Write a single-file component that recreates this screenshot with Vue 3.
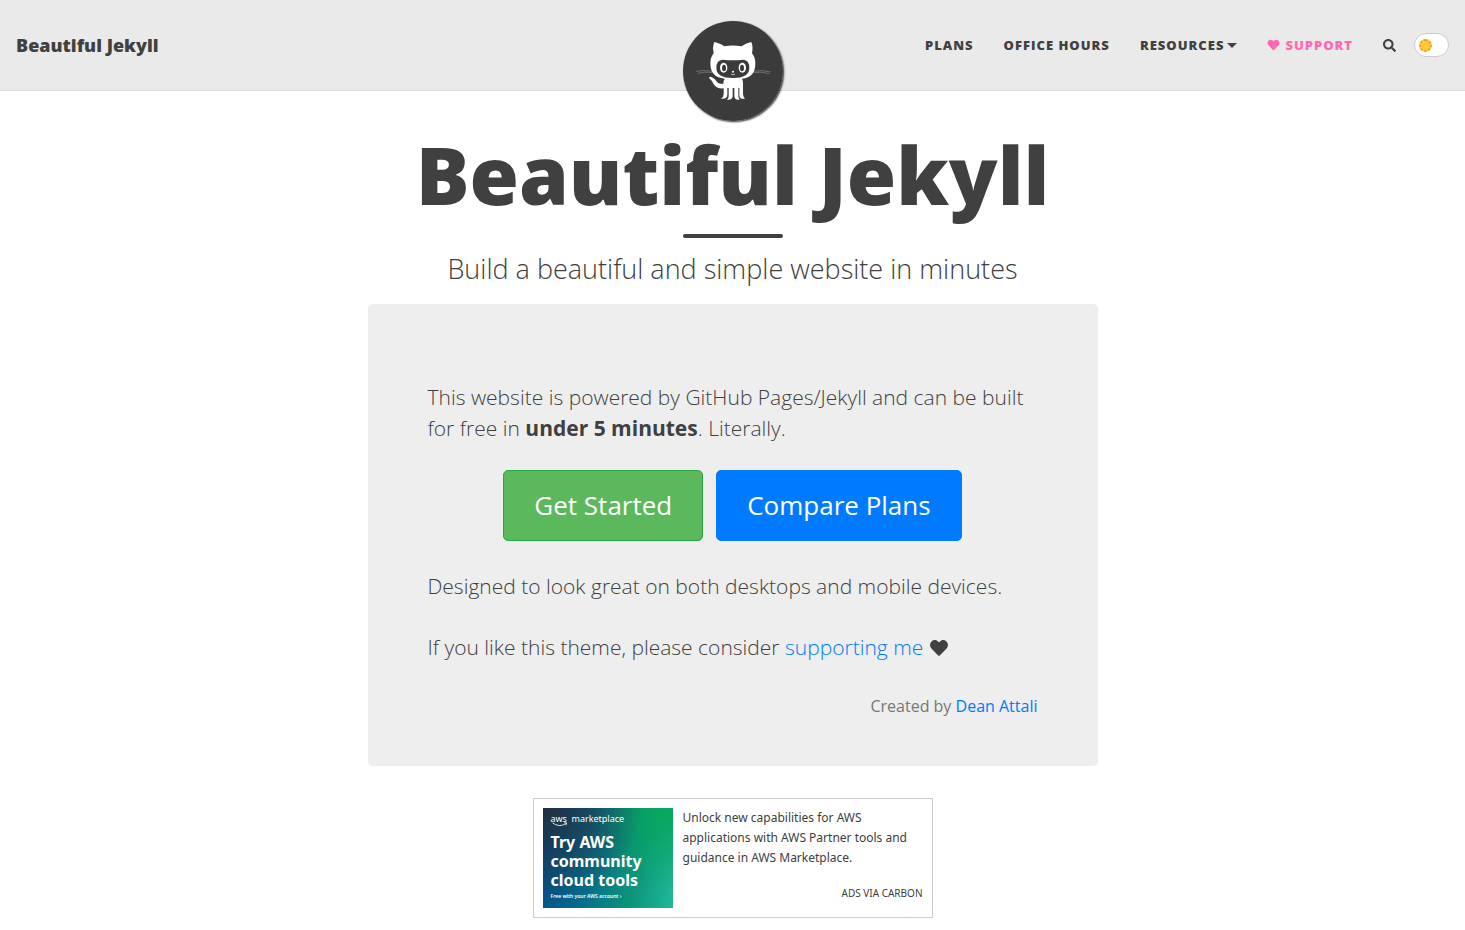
<script setup>
import { ref } from "vue"

const dark = ref(false)

const heart =
    "M462.3 62.6C407.5 15.9 326 24.3 275.7 76.200l-19.700 20.300-19.700-20.300C186.100 24.300 104.500 15.900 49.700 62.600c-62.800 53.600-66.100 149.800-9.900 207.900l193.500 199.800c12.500 12.900 32.800 12.900 45.300 0l193.500-199.800c56.300-58.100 53-154.300-9.800-207.900z"
</script>

<template>
  <div class="page">
    <header class="navbar">
      <a class="brand" href="#">Beautiful Jekyll</a>

      <a class="avatar" href="#" aria-label="Home">
        <svg viewBox="39 33 300 300">
          <circle cx="189" cy="183" r="150" fill="#3b3b3b" />
          <g fill="none" stroke="#888" stroke-width="2">
            <path d="M78 184 Q100 179 128 184" />
            <path d="M83 190 Q106 184 130 188" />
            <path d="M250 184 Q278 179 302 186" />
            <path d="M250 188 Q276 184 298 191" />
          </g>
          <path
              fill="#fff"
              d="M132 97 Q146 98 163 109 Q188 104 214 109 Q230 98 244 96 Q250 111 246 130 Q256 142 256 160 Q256 204 216 206 Q219 211 219 221 L219 252 Q220 262 225 266 Q210 269 208 257 L208 234 L205 234 L205 258 Q205 266 209 269 Q195 272 193 259 L193 234 L188 234 L188 259 Q187 271 171 269 Q176 266 176 258 L176 234 L172 234 L172 255 Q171 268 153 266 Q161 262 161 252 L161 235 Q139 237 130 221 Q127 212 117 204 Q119 197 128 203 Q138 208 139 214 Q144 222 153 221 L160 221 Q160 211 164 206 Q121 203 121 160 Q121 142 131 130 Q127 112 132 97 Z"
          />
          <path
              fill="#3b3b3b"
              d="M158 149 Q188 153 220 149 Q238 150 238 174 Q238 204 189 204 Q139 204 139 174 Q139 150 158 149 Z"
          />
          <ellipse cx="161" cy="173" rx="11" ry="15" fill="#fff" />
          <ellipse cx="217" cy="173" rx="11" ry="15" fill="#fff" />
          <ellipse cx="162" cy="174" rx="6" ry="10" fill="#3b3b3b" />
          <ellipse cx="216" cy="174" rx="6" ry="10" fill="#3b3b3b" />
          <circle cx="189" cy="185" r="3" fill="#fff" />
          <path
              d="M183 192 Q189 197 195 192"
              fill="none"
              stroke="#fff"
              stroke-width="2"
          />
        </svg>
      </a>

      <nav class="links">
        <a href="#">Plans</a>
        <a href="#">Office Hours</a>
        <a class="dropdown" href="#">Resources</a>
        <a class="support" href="#">
          <svg class="heart" viewBox="0 0 512 512">
            <path :d="heart" fill="currentColor" />
          </svg>
          Support
        </a>
        <button class="search" type="button" aria-label="Search">
          <svg viewBox="0 0 512 512">
            <path
                fill="currentColor"
                d="M505 442.700L405.300 343c-4.500-4.500-10.600-7-17-7H372c27.600-35.300 44-79.700 44-128C416 93.100 322.900 0 208 0S0 93.100 0 208s93.100 208 208 208c48.300 0 92.700-16.400 128-44v16.300c0 6.400 2.500 12.500 7 17l99.700 99.700c9.400 9.400 24.600 9.400 33.900 0l28.300-28.300c9.400-9.400 9.400-24.600.1-34zM208 336c-70.700 0-128-57.200-128-128 0-70.700 57.200-128 128-128 70.700 0 128 57.200 128 128 0 70.700-57.200 128-128 128z"
            />
          </svg>
        </button>
        <label class="theme">
          <input v-model="dark" type="checkbox" aria-label="Dark mode" />
          <span class="sun"></span>
        </label>
      </nav>
    </header>

    <main>
      <div class="heading">
        <h1>Beautiful Jekyll</h1>
        <hr />
        <p class="subheading">Build a beautiful and simple website in minutes</p>
      </div>

      <section class="intro">
        <p>
          This website is powered by GitHub Pages/Jekyll and can be built for
          free in <strong>under 5 minutes</strong>. Literally.
        </p>

        <div class="actions">
          <a class="btn started" href="#">Get Started</a>
          <a class="btn plans" href="#">Compare Plans</a>
        </div>

        <p>Designed to look great on both desktops and mobile devices.</p>

        <p>
          If you like this theme, please consider
          <a href="#">supporting me</a>
          <svg class="heart" viewBox="0 0 512 512">
            <path :d="heart" fill="currentColor" />
          </svg>
        </p>

        <p class="author">Created by <a href="#">Dean Attali</a></p>
      </section>

      <aside class="ad">
        <a class="ad-image" href="#">
          <span class="ad-logo">
            <span class="aws">
              aws
              <svg viewBox="0 0 20 6">
                <path
                    d="M1 1 Q9 7 17 2 M15 1 L18 1 L17 4"
                    fill="none"
                    stroke="#fff"
                />
              </svg>
            </span>
            marketplace
          </span>
          <strong>Try AWS community cloud tools</strong>
          <small>Free with your AWS account ›</small>
        </a>

        <div class="ad-copy">
          <a class="ad-text" href="#">
            Unlock new capabilities for AWS applications with AWS Partner tools
            and guidance in AWS Marketplace.
          </a>
          <a class="ad-via" href="#">ads via Carbon</a>
        </div>
      </aside>
    </main>
  </div>
</template>

<style>
body {
  margin: 0;
  background: #fff;
}
</style>

<style scoped>
.page {
  color: #404040;
  font-family: "Open Sans", "Noto Sans", sans-serif;
}

a {
  color: #007bff;
  text-decoration: none;
}

.navbar {
  position: relative;
  display: flex;
  align-items: center;
  justify-content: space-between;
  height: 90px;
  padding: 0 16px;
  background: #eaeaea;
  border-bottom: 1px solid #ddd;
}

.brand {
  color: #404040;
  font-size: 18px;
  font-weight: 800;
}

.avatar {
  position: absolute;
  top: 21px;
  left: 50%;
  width: 100px;
  height: 100px;
  margin-left: -50px;
  border-radius: 50%;
  box-shadow: 1px 1px 2px rgba(0, 0, 0, 0.8);
}

.avatar svg {
  display: block;
  width: 100%;
}

.links {
  display: flex;
  align-items: center;
  gap: 30px;
}

.links a {
  color: #404040;
  font-size: 13px;
  font-weight: 800;
  letter-spacing: 1px;
  text-transform: uppercase;
}

.links .dropdown {
  display: flex;
  align-items: center;
  gap: 3px;
}

.dropdown::after {
  content: "";
  border: 5px solid transparent;
  border-top-color: #404040;
  border-bottom: 0;
}

.links .support {
  display: flex;
  align-items: center;
  gap: 5px;
  color: #ff69b4;
}

.support .heart {
  width: 13px;
  height: 12px;
}

.search {
  padding: 0;
  border: 0;
  background: none;
  color: #404040;
}

.search svg {
  display: block;
  width: 13px;
  height: 13px;
}

.theme {
  display: flex;
  align-items: center;
  box-sizing: border-box;
  width: 35px;
  height: 24px;
  margin-left: -12px;
  padding: 0 4px;
  border: 1px solid #ccc;
  border-radius: 12px;
  background: #fff;
}

.theme input {
  position: absolute;
  opacity: 0;
}

.sun {
  box-sizing: border-box;
  width: 13px;
  height: 13px;
  border: 2px dotted #f39a1e;
  border-radius: 50%;
  background: #ffc83d;
}

.theme input:checked + .sun {
  margin-left: auto;
}

main {
  padding: 0 16px;
}

.heading {
  padding-top: 35px;
  text-align: center;
}

h1 {
  margin: 0;
  font-size: 80px;
  font-weight: 800;
  line-height: 96px;
}

hr {
  width: 100px;
  height: 4px;
  margin: 12px auto 16px;
  border: 0;
  border-radius: 2px;
  background: #404040;
}

.subheading {
  margin: 0;
  font-size: 27px;
  font-weight: 300;
  line-height: 30px;
}

.intro {
  box-sizing: border-box;
  max-width: 730px;
  margin: 20px auto 32px;
  padding: 78px 60px 44px;
  border-radius: 5px;
  background: #eee;
  font-size: 21px;
  font-weight: 300;
  line-height: 31px;
}

.intro p {
  margin: 0 0 30px;
}

.intro strong {
  font-weight: 700;
}

.intro .heart {
  width: 20px;
  height: 18px;
  margin-left: 6px;
  vertical-align: -2px;
}

.actions {
  display: flex;
  flex-wrap: wrap;
  justify-content: center;
  gap: 13px;
  margin: -4px 0 30px;
}

.btn {
  padding: 15px 30px;
  border: 1px solid;
  border-radius: 5px;
  color: #fff;
  font-size: 26px;
  font-weight: 400;
  line-height: 39px;
}

.started {
  border-color: #28a745;
  background: #5cb85c;
}

.plans {
  border-color: #007bff;
  background: #007bff;
}

.intro .author {
  margin: -2px 0 0;
  color: #777;
  font-size: 16px;
  font-weight: 400;
  text-align: right;
}

.ad {
  display: flex;
  box-sizing: border-box;
  max-width: 400px;
  min-height: 120px;
  margin: 0 auto;
  padding: 9px;
  gap: 10px;
  border: 1px solid #ccc;
}

.ad-image {
  display: flex;
  flex: none;
  flex-direction: column;
  box-sizing: border-box;
  width: 130px;
  height: 100px;
  padding: 4px 8px;
  background:
      radial-gradient(
          circle at 0 0,
          #232f3e 0%,
          rgba(35, 47, 62, 0) 60%
      ),
      radial-gradient(
          circle at 100% 0,
          #05a85a 0%,
          rgba(5, 168, 90, 0) 50%
      ),
      linear-gradient(
          100deg,
          #004b8d 0%,
          #08708a 40%,
          #0c9479 70%,
          #22b899 100%
      );
  color: #fff;
  font-family: "Noto Sans", sans-serif;
}

.ad-logo {
  display: flex;
  gap: 3px;
  font-size: 9px;
  line-height: 13px;
}

.aws svg {
  display: block;
  width: 18px;
  height: 5px;
  margin-top: -3px;
}

.ad-image strong {
  margin-top: 6px;
  font-size: 16px;
  font-weight: 700;
  line-height: 19px;
}

.ad-image small {
  font-size: 5px;
  font-weight: 600;
  line-height: 12px;
}

.ad-copy {
  display: flex;
  flex: 1;
  flex-direction: column;
  justify-content: space-between;
}

.ad-text {
  color: #404040;
  font-family: "Noto Sans", sans-serif;
  font-size: 12px;
  line-height: 20px;
}

.ad-via {
  color: #404040;
  font-family: "Noto Sans", sans-serif;
  font-size: 10px;
  line-height: 30px;
  text-align: right;
  text-transform: uppercase;
}

@media (max-width: 800px) {
  .navbar {
    height: auto;
    min-height: 90px;
  }

  .links {
    flex-wrap: wrap;
    gap: 16px;
  }

  .heading {
    padding-top: 48px;
  }

  h1 {
    font-size: 48px;
    line-height: 60px;
  }

  .intro {
    padding: 32px 24px;
  }
}
</style>
